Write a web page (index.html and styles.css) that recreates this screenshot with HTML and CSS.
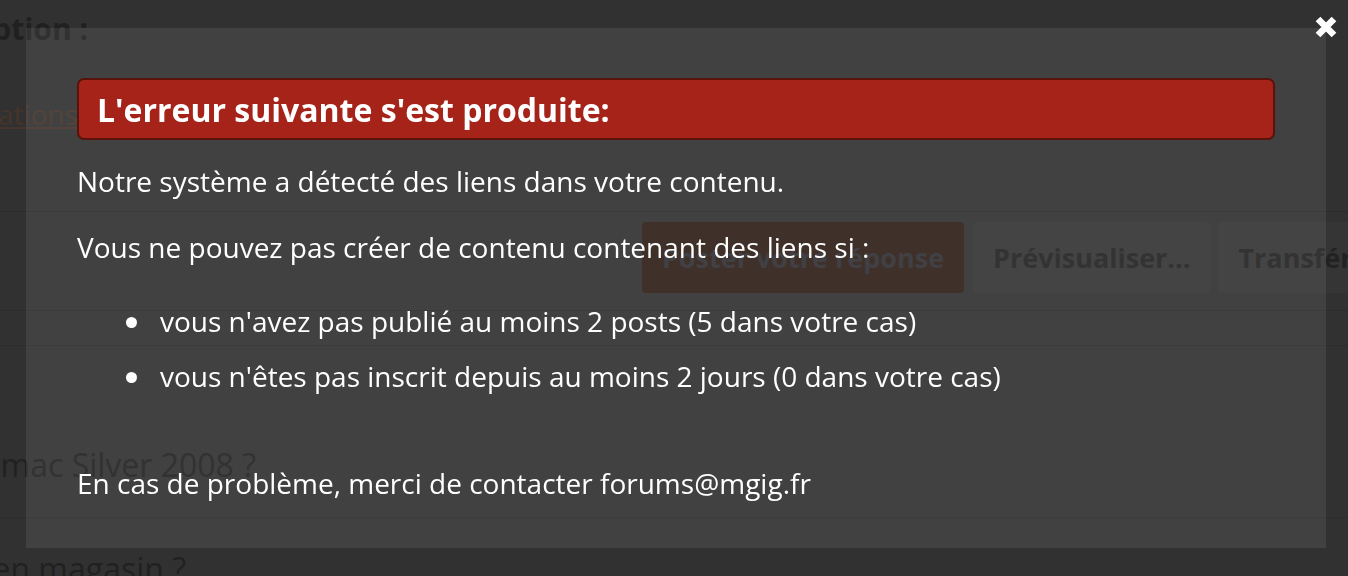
FILE: index.html
```html
<!DOCTYPE html>
<html lang="fr">
<head>
<meta charset="utf-8">
<title>Erreur</title>
<link rel="stylesheet" href="styles.css">
</head>
<body>
<div class="page">
  <div class="cut-row heading-row"><span class="heading">Description :</span></div>
  <div class="cut-row link-row"><a class="bg-link" href="#">Informations</a></div>
  <div class="rule rule-a"></div>
  <div class="buttons">
    <span class="btn btn-primary">Poster votre réponse</span>
    <span class="btn">Prévisualiser...</span>
    <span class="btn">Transférer</span>
  </div>
  <div class="rule rule-b"></div>
  <div class="rule rule-c"></div>
  <div class="cut-row topic-row"><span class="topic">imac Silver 2008 ?</span></div>
  <div class="rule rule-d"></div>
  <div class="cut-row topic-row2"><span class="topic">Acheter en magasin ?</span></div>
</div>

<div class="modal">
  <button class="close" type="button" aria-label="Fermer">
    <svg viewBox="0 0 24 24" width="24" height="24"><path d="M4 4 L20 20 M20 4 L4 20" stroke="#fff" stroke-width="6.6" stroke-linecap="butt" fill="none"/></svg>
  </button>
  <div class="error-box">L'erreur suivante s'est produite:</div>
  <p class="msg msg-1">Notre système a détecté des liens dans votre contenu.</p>
  <p class="msg msg-2">Vous ne pouvez pas créer de contenu contenant des liens si :</p>
  <ul class="reasons">
    <li>vous n'avez pas publié au moins 2 posts (5 dans votre cas)</li>
    <li>vous n'êtes pas inscrit depuis au moins 2 jours (0 dans votre cas)</li>
  </ul>
  <p class="msg msg-last">En cas de problème, merci de contacter forums@mgig.fr</p>
</div>
</body>
</html>
```

FILE: styles.css
```css
html, body {
  margin: 0;
  padding: 0;
}
body {
  width: 1348px;
  height: 576px;
  overflow: hidden;
  background: #313131;
  font-family: "Open Sans", "Noto Sans", sans-serif;
}

/* dimmed page behind the overlay */
.page {
  display: flex;
  flex-direction: column;
}
.cut-row {
  display: flex;
  justify-content: flex-end;
  overflow: hidden;
  white-space: nowrap;
}
.heading-row {
  width: 88px;
  height: 56px;
  align-items: center;
}
.heading {
  font-weight: 700;
  font-size: 30px;
  color: #202020;
}
.link-row {
  width: 78px;
  height: 60px;
  margin-top: 28px;
  align-items: center;
}
.bg-link {
  font-size: 28px;
  color: #46342b;
  text-decoration: underline;
}
.rule {
  height: 1px;
  background: #2c2c2c;
}
.rule-a { margin-top: 67px; }
.buttons {
  display: flex;
  gap: 8px;
  margin-top: 10px;
  margin-left: 642px;
  height: 71px;
}
.btn {
  flex-shrink: 0;
  display: flex;
  align-items: center;
  justify-content: center;
  height: 71px;
  padding: 0 20px;
  border-radius: 4px;
  background: #353535;
  color: #222;
  font-weight: 700;
  font-size: 27px;
  white-space: nowrap;
}
.btn-primary {
  width: 322px;
  padding: 0;
  margin-right: 1px;
  background: #2f2018;
  color: #303036;
}
.rule-b { margin-top: 17px; }
.rule-c { margin-top: 34px; }
.topic-row {
  width: 256px;
  height: 50px;
  margin-top: 93px;
  align-items: center;
}
.topic {
  font-size: 32px;
  color: #212121;
}
.rule-d { margin-top: 28px; }
.topic-row2 {
  width: 186px;
  height: 40px;
  margin-top: 30px;
  align-items: center;
}

/* modal */
.modal {
  position: fixed;
  left: 26px;
  top: 28px;
  width: 1300px;
  height: 520px;
  box-sizing: border-box;
  padding: 50px 51px 0 51px;
  background: rgba(255, 255, 255, 0.08);
  color: #fff;
}
.close {
  position: absolute;
  right: -12px;
  top: -13px;
  width: 24px;
  height: 24px;
  padding: 0;
  border: 0;
  background: none;
  display: block;
}
.close svg { display: block; }
.error-box {
  height: 62px;
  box-sizing: border-box;
  border: 2px solid #5a130b;
  border-radius: 7px;
  background: #a52318;
  padding: 0 18px;
  display: flex;
  align-items: center;
  font-weight: 700;
  font-size: 32px;
  color: #fff;
}
.msg {
  margin: 0;
  font-size: 28px;
  line-height: 38px;
}
.msg-1 { margin-top: 22px; }
.msg-2 { margin-top: 28px; }
.reasons {
  margin: 36px 0 0 0;
  padding: 0 0 0 83px;
  list-style: none;
  font-size: 28px;
  line-height: 38px;
}
.reasons li::before {
  content: "";
  display: inline-block;
  width: 11px;
  height: 11px;
  border-radius: 50%;
  background: #fff;
  margin-left: -34px;
  margin-right: 23px;
  vertical-align: 4px;
}
.reasons li + li { margin-top: 17px; }
.msg-last { margin-top: 69px; }
```
